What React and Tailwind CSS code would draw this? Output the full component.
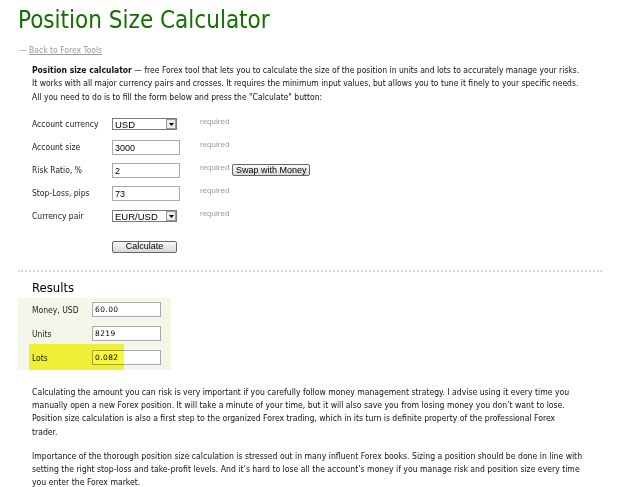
const tahoma = { fontFamily: "Tahoma, 'DejaVu Sans Condensed', 'Liberation Sans', sans-serif" };
const arial = { fontFamily: "'Liberation Sans', Arial, sans-serif" };

const Field = ({ label, children, required = true, extra }) => (
  <div className="flex h-[23px] items-center">
    <div className="w-[80px] whitespace-nowrap text-[8.5px] text-[#222]">{label}</div>
    <div className="w-[88px]">{children}</div>
    {required && (
      <span className="-mt-[5px] text-[8px] text-[#999]" style={arial}>
        required
      </span>
    )}
    {extra}
  </div>
);

const TextBox = ({ value }) => (
  <div
    className="h-[15px] w-[68px] border border-[#aaa] bg-white pl-[2px] text-[9px] leading-[14px] text-black"
    style={arial}
  >
    {value}
  </div>
);

const SelectBox = ({ value }) => (
  <div
    className="flex h-[12px] w-[65px] items-center justify-between border border-[#7a7a7a] bg-white pl-[2px] text-[9.5px] text-black"
    style={arial}
  >
    <span className="leading-[11px]">{value}</span>
    <span className="flex h-[10px] w-[10px] items-center justify-center border border-[#999] bg-[#eee]">
      <svg width="5" height="3" viewBox="0 0 5 3">
        <path d="M0 0h5L2.5 3z" fill="#000" />
      </svg>
    </span>
  </div>
);

const GrayButton = ({ children, className = "" }) => (
  <div
    className={`flex items-center justify-center whitespace-nowrap rounded-[2px] border border-[#666] bg-gradient-to-b from-[#fafafa] to-[#d8d8d8] text-[9px] leading-none text-black ${className}`}
    style={arial}
  >
    {children}
  </div>
);

const ResultRow = ({ label, value }) => (
  <div className="flex h-[24px] items-center">
    <div className="w-[60px] text-[8.5px] text-[#222]">{label}</div>
    <div
      className="h-[15px] w-[69px] border border-[#aaa] bg-white pl-[2px] text-[7.5px] leading-[14px] tracking-[0.4px] text-black"
      style={{ fontFamily: "'DejaVu Sans', Verdana, sans-serif" }}
    >
      {value}
    </div>
  </div>
);

export default function App() {
  return (
    <div className="min-h-screen bg-white px-[18px] pt-[6px] text-black" style={tahoma}>
      <h1 className="text-[24px] leading-[28px] text-[#137000]">Position Size Calculator</h1>

      <div className="mt-[11px] pl-[1px] text-[8.5px] leading-[11px] text-[#999]">
        — <span className="underline">Back to Forex Tools</span>
      </div>

      <div className="ml-[14px] mt-[8px] w-[570px] text-[8.5px] leading-[13.3px] text-[#111]">
        <p>
          <b>Position size calculator</b> — free Forex tool that lets you to calculate the size of the
          position in units and lots to accurately manage your risks.
          <br />
          It works with all major currency pairs and crosses. It requires the minimum input values, but
          allows you to tune it finely to your specific needs.
          <br />
          All you need to do is to fill the form below and press the "Calculate" button:
        </p>
      </div>

      {/* Форма */}
      <div className="ml-[14px] mt-[9px]">
        <Field label="Account currency">
          <SelectBox value="USD" />
        </Field>
        <Field label="Account size">
          <TextBox value="3000" />
        </Field>
        <Field
          label="Risk Ratio, %"
          extra={<GrayButton className="ml-[3px] h-[12px] w-[78px]">Swap with Money</GrayButton>}
        >
          <TextBox value="2" />
        </Field>
        <Field label="Stop-Loss, pips">
          <TextBox value="73" />
        </Field>
        <Field label="Currency pair">
          <SelectBox value="EUR/USD" />
        </Field>
        <div className="ml-[80px] mt-[13px]">
          <GrayButton className="h-[12px] w-[65px]">Calculate</GrayButton>
        </div>
      </div>

      <div className="mt-[17px] w-[584px] border-t-2 border-dotted border-[#d6dac6]" />

      {/* Результаты */}
      <div className="ml-[14px] mt-[7px] text-[13px] leading-[18px]">Results</div>
      <div className="relative mt-[1px] w-[153px] bg-[#f5f6ea] pl-[14px]">
        <ResultRow label="Money, USD" value="60.00" />
        <ResultRow label="Units" value="8219" />
        <ResultRow label="Lots" value="0.082" />
        <div className="absolute bottom-0 left-[11px] h-[26px] w-[95px] bg-[#f8f83a] mix-blend-multiply" />
      </div>

      <div className="ml-[14px] mt-[16px] w-[580px] text-[8.6px] leading-[13.3px] text-[#111]">
        <p>
          Calculating the amount you can risk is very important if you carefully follow money management
          strategy. I advise using it every time you
          <br />
          manually open a new Forex position. It will take a minute of your time, but it will also save you
          from losing money you don’t want to lose.
          <br />
          Position size calculation is also a first step to the organized Forex trading, which in its turn
          is definite property of the professional Forex
          <br />
          trader.
        </p>
        <p className="mt-[10.5px]">
          Importance of the thorough position size calculation is stressed out in many influent Forex
          books. Sizing a position should be done in line with
          <br />
          setting the right stop-loss and take-profit levels. And it’s hard to lose all the account’s money
          if you manage risk and position size every time
          <br />
          you enter the Forex market.
        </p>
      </div>
    </div>
  );
}
